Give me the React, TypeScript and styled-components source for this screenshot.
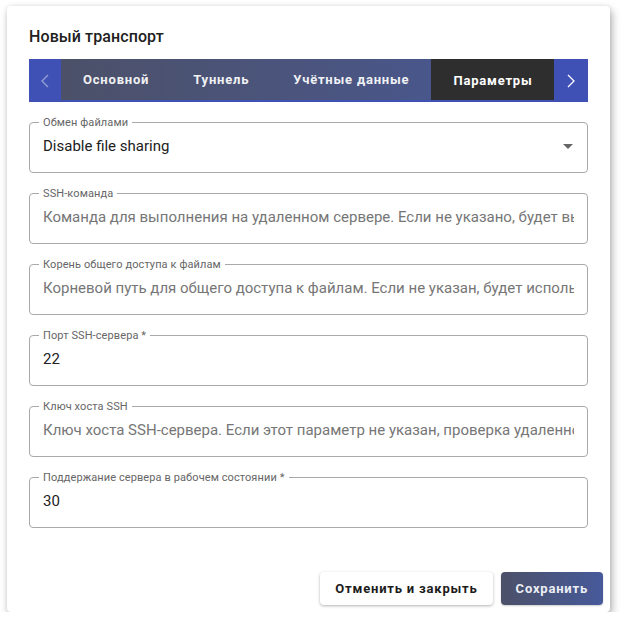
import React from "react";
import styled, { createGlobalStyle } from "styled-components";

const GlobalStyle = createGlobalStyle`
  html, body {
    margin: 0;
    padding: 0;
    background: #ffffff;
  }
  body {
    font-family: Roboto, "Noto Sans", "Liberation Sans", sans-serif;
  }
  * {
    box-sizing: border-box;
  }
`;

const Dialog = styled.div`
  width: 603px;
  height: 606px;
  margin: 6px 0 0 7px;
  padding: 20px 22px 7px;
  background: #ffffff;
  border-radius: 4px;
  box-shadow: 2px 4px 8px rgba(0, 0, 0, 0.3), 0 0 4px rgba(0, 0, 0, 0.08);
  display: flex;
  flex-direction: column;
`;

const Title = styled.h2`
  margin: 0;
  font-size: 16px;
  line-height: 22px;
  font-weight: 500;
  color: #212121;
  letter-spacing: 0.1px;
`;

const TabBar = styled.div`
  margin-top: 11px;
  height: 43px;
  display: flex;
`;

const ArrowButton = styled.button<{ $faded?: boolean; $width: number }>`
  flex: none;
  width: ${({ $width }) => $width}px;
  height: 100%;
  border: none;
  padding: 0;
  background: #3f51b5;
  display: flex;
  align-items: center;
  justify-content: center;
  cursor: pointer;

  svg {
    opacity: ${({ $faded }) => ($faded ? 0.45 : 1)};
  }
`;

const TabScroller = styled.div`
  flex: 1;
  min-width: 0;
  overflow: hidden;
  display: flex;
  background: linear-gradient(90deg, #4c5169 0%, #4a5582 60%, #47599a 100%);
  border-bottom: 2px solid #3f51b5;
`;

const Tab = styled.div<{ $active?: boolean }>`
  flex: none;
  padding: 0 22px;
  display: flex;
  align-items: center;
  font-size: 13px;
  font-weight: 700;
  letter-spacing: 0.8px;
  color: #ffffff;
  white-space: nowrap;
  background: ${({ $active }) => ($active ? "#2e2e2e" : "transparent")};
  margin-bottom: ${({ $active }) => ($active ? "-2px" : "0")};
  opacity: ${({ $active }) => ($active ? 1 : 0.92)};
`;

const Form = styled.div`
  margin-top: 14px;
  display: flex;
  flex-direction: column;
  gap: 14px;
`;

const Field = styled.fieldset`
  margin: 0;
  min-width: 0;
  padding: 0 13px 9px;
  border: 1px solid #a9a9a9;
  border-radius: 4px;
`;

const Legend = styled.legend`
  margin-left: -4px;
  padding: 0 4px;
  font-size: 11px;
  line-height: 13px;
  color: #666666;
  letter-spacing: 0.1px;
`;

const Input = styled.input`
  display: block;
  width: 100%;
  height: 34px;
  padding: 0;
  border: none;
  outline: none;
  background: transparent;
  font-family: inherit;
  font-size: 15px;
  letter-spacing: 0;
  color: #212121;

  &::placeholder {
    color: #767676;
    opacity: 1;
  }
`;

const SelectValue = styled.div`
  height: 34px;
  display: flex;
  align-items: center;
  justify-content: space-between;
  font-size: 15px;
  letter-spacing: 0;
  color: #212121;
  cursor: pointer;
`;

const Caret = styled.span`
  width: 0;
  height: 0;
  margin-right: 1px;
  border-left: 5px solid transparent;
  border-right: 5px solid transparent;
  border-top: 5px solid #666666;
`;

const Footer = styled.div`
  margin-top: auto;
  margin-right: -15px;
  display: flex;
  justify-content: flex-end;
  gap: 8px;
`;

const Button = styled.button<{ $primary?: boolean }>`
  height: 33px;
  padding: 0 15px;
  border: none;
  border-radius: 4px;
  font-family: inherit;
  font-size: 13px;
  font-weight: 700;
  letter-spacing: 0.8px;
  cursor: pointer;
  color: ${({ $primary }) => ($primary ? "#eceef5" : "#1c1c1c")};
  background: ${({ $primary }) =>
    $primary ? "linear-gradient(90deg, #4c5169, #46599a)" : "#ffffff"};
  box-shadow: ${({ $primary }) =>
    $primary ? "0 1px 2px rgba(0,0,0,0.2)" : "0 1px 3px rgba(0,0,0,0.3)"};
`;

const Chevron = ({ dir }: { dir: "left" | "right" }) => (
  <svg width="8" height="14" viewBox="0 0 8 14" fill="none">
    <path
      d={dir === "left" ? "M7 1 L1 7 L7 13" : "M1 1 L7 7 L1 13"}
      stroke="#ffffff"
      strokeWidth="1.3"
    />
  </svg>
);

const tabs = ["Основной", "Туннель", "Учётные данные", "Параметры"];

const textFields = [
  {
    label: "SSH-команда",
    placeholder:
      "Команда для выполнения на удаленном сервере. Если не указано, будет выполнена команда по умолчанию",
  },
  {
    label: "Корень общего доступа к файлам",
    placeholder:
      "Корневой путь для общего доступа к файлам. Если не указан, будет использован домашний каталог",
  },
  { label: "Порт SSH-сервера *", value: "22" },
  {
    label: "Ключ хоста SSH",
    placeholder:
      "Ключ хоста SSH-сервера. Если этот параметр не указан, проверка удаленного хоста не выполняется",
  },
  { label: "Поддержание сервера в рабочем состоянии *", value: "30" },
];

export default function App() {
  return (
    <>
      <GlobalStyle />
      <Dialog>
        <Title>Новый транспорт</Title>
        <TabBar>
          <ArrowButton $faded $width={32}>
            <Chevron dir="left" />
          </ArrowButton>
          <TabScroller>
            {tabs.map((t) => (
              <Tab key={t} $active={t === "Параметры"}>
                {t}
              </Tab>
            ))}
          </TabScroller>
          <ArrowButton $width={34}>
            <Chevron dir="right" />
          </ArrowButton>
        </TabBar>
        <Form>
          <Field>
            <Legend>Обмен файлами</Legend>
            <SelectValue>
              Disable file sharing
              <Caret />
            </SelectValue>
          </Field>
          {textFields.map((f) => (
            <Field key={f.label}>
              <Legend>{f.label}</Legend>
              <Input placeholder={f.placeholder} defaultValue={f.value} />
            </Field>
          ))}
        </Form>
        <Footer>
          <Button>Отменить и закрыть</Button>
          <Button $primary>Сохранить</Button>
        </Footer>
      </Dialog>
    </>
  );
}
